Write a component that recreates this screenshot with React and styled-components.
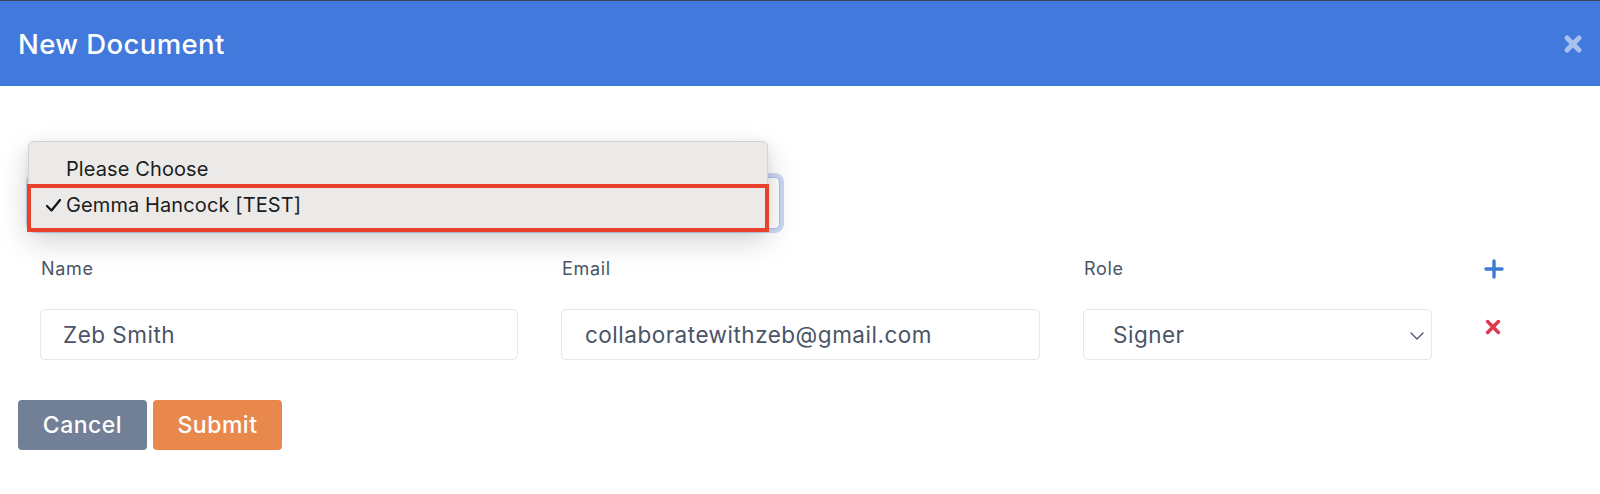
import styled, { createGlobalStyle } from 'styled-components';

const GlobalStyle = createGlobalStyle`
  html, body {
    margin: 0;
    padding: 0;
    background: #ffffff;
  }
  body {
    font-family: Inter, "Open Sans", sans-serif;
    color: #4a5568;
  }
  * {
    box-sizing: border-box;
  }
`;

const Header = styled.div`
  height: 86px;
  border-top: 1px solid #3d4558;
  background: #4279dc;
  display: flex;
  align-items: center;
  justify-content: space-between;
  padding: 0 17px 0 18px;
`;

const Title = styled.h1`
  margin: 0;
  font-size: 27.5px;
  font-weight: 500;
  color: #ffffff;
  letter-spacing: 0.4px;
`;

const CloseBtn = styled.button`
  border: 0;
  background: none;
  padding: 0;
  display: flex;
  cursor: pointer;
`;

const Body = styled.div`
  padding: 0 0 40px 0;
`;

const TemplateArea = styled.div`
  position: relative;
  margin: 91px 0 0 30px;
  width: 750px;
`;

const TemplateSelect = styled.div`
  height: 52px;
  border: 1px solid #a9c0ee;
  border-radius: 5px;
  box-shadow: 0 0 0 4px #c9d8f2;
  background: #fff;
`;

const Popup = styled.div`
  position: absolute;
  left: -2px;
  top: -36px;
  width: 740px;
  height: 88px;
  background: #ebeae8;
  border: 1px solid #d3d2d0;
  border-radius: 6px;
  box-shadow: 0 12px 30px rgba(0, 0, 0, 0.18), 0 2px 8px rgba(0, 0, 0, 0.08);
  padding-top: 9px;
  font-family: Inter, "Liberation Sans", sans-serif;
  color: #1c1c1c;
`;

const Option = styled.div`
  position: relative;
  height: 36px;
  display: flex;
  align-items: center;
  padding-left: 37px;
  font-size: 20px;
  letter-spacing: 0.1px;
`;

const Check = styled.span`
  position: absolute;
  left: 16px;
  top: 11px;
  display: flex;
`;

const Highlight = styled.div`
  position: absolute;
  left: -2px;
  right: -2px;
  top: 42px;
  height: 48px;
  border: 4px solid #e8432a;
  pointer-events: none;
`;

const FormGrid = styled.div`
  display: grid;
  grid-template-columns: 478px 479px 349px 40px;
  column-gap: 43px;
  row-gap: 28px;
  padding-left: 40px;
  margin-top: 28px;
  align-items: center;
`;

const Label = styled.label`
  font-size: 18px;
  line-height: 24px;
  letter-spacing: 0.7px;
  color: #4a5568;
  padding-left: 1px;
`;

const TextInput = styled.div`
  height: 51px;
  border: 1px solid #e2e8f0;
  border-radius: 5px;
  display: flex;
  align-items: center;
  padding-left: ${p => p.$pad || 22}px;
  font-size: 22.5px;
  letter-spacing: 0.5px;
  color: #4a5568;
  position: relative;
`;

const Chevron = styled.span`
  position: absolute;
  right: 7px;
  top: 22px;
  display: flex;
`;

const IconCell = styled.div`
  display: flex;
  padding-left: 9px;
  align-self: ${p => p.$self || 'center'};
`;

const Actions = styled.div`
  display: flex;
  gap: 6px;
  margin: 40px 0 0 18px;
`;

const Button = styled.button`
  width: 129px;
  height: 50px;
  border: 0;
  border-radius: 4px;
  background: ${p => p.$bg};
  color: #ffffff;
  font-family: Inter, "Open Sans", sans-serif;
  font-size: 23px;
  font-weight: 500;
  letter-spacing: 0.5px;
  cursor: pointer;
`;

function XIcon({ size, color, stroke }) {
  return (
    <svg width={size} height={size} viewBox="0 0 20 20">
      <path d="M4 4 L16 16 M16 4 L4 16" stroke={color} strokeWidth={stroke} strokeLinecap="round" />
    </svg>
  );
}

export default function App() {
  return (
    <>
      <GlobalStyle />
      <Header>
        <Title>New Document</Title>
        <CloseBtn aria-label="close">
          <XIcon size={20} color="#a8c2f0" stroke={5} />
        </CloseBtn>
      </Header>
      <Body>
        <TemplateArea>
          <TemplateSelect />
          <Popup>
            <Option>Please Choose</Option>
            <Option>
              <Check>
                <svg width="17" height="15" viewBox="0 0 17 15">
                  <path d="M2 8 L6.5 12.5 L15 2" fill="none" stroke="#111" strokeWidth="2.2" strokeLinecap="round" strokeLinejoin="round" />
                </svg>
              </Check>
              Gemma Hancock [TEST]
            </Option>
            <Highlight />
          </Popup>
        </TemplateArea>

        <FormGrid>
          <Label>Name</Label>
          <Label>Email</Label>
          <Label>Role</Label>
          <IconCell>
            <svg width="20" height="20" viewBox="0 0 20 20">
              <path d="M10 2 V18 M2 10 H18" stroke="#3a7bd5" strokeWidth="3.4" strokeLinecap="round" />
            </svg>
          </IconCell>

          <TextInput>Zeb Smith</TextInput>
          <TextInput $pad={23}>collaboratewithzeb@gmail.com</TextInput>
          <TextInput $pad={29}>
            Signer
            <Chevron>
              <svg width="14" height="8" viewBox="0 0 14 8">
                <path d="M1 1 L7 7 L13 1" fill="none" stroke="#4a5568" strokeWidth="1.4" strokeLinecap="round" strokeLinejoin="round" />
              </svg>
            </Chevron>
          </TextInput>
          <IconCell $self="start">
            <span style={{ marginTop: 9 }}>
              <XIcon size={18} color="#dd3b51" stroke={4} />
            </span>
          </IconCell>
        </FormGrid>

        <Actions>
          <Button $bg="#718096">Cancel</Button>
          <Button $bg="#e9884c">Submit</Button>
        </Actions>
      </Body>
    </>
  );
}
